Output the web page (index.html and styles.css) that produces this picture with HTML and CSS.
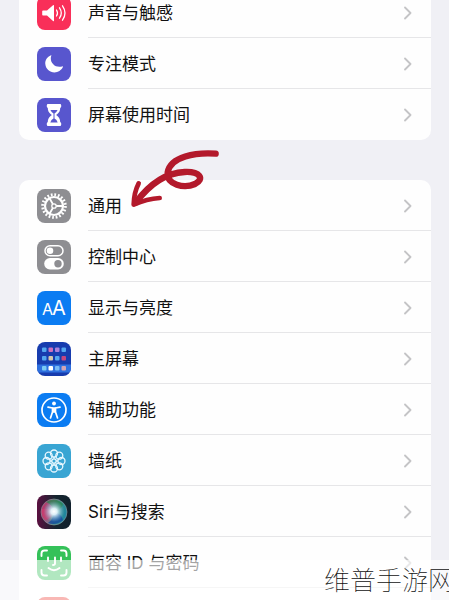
FILE: index.html
```html
<!DOCTYPE html>
<html lang="zh-CN">
<head>
<meta charset="utf-8">
<meta name="viewport" content="width=device-width, initial-scale=1">
<title>设置</title>
<link rel="stylesheet" href="styles.css">
</head>
<body>
<svg class="defs" aria-hidden="true">
  <defs>
    <symbol id="chevron" viewBox="0 0 8 14"><path d="M1 1.500 6.500 7 1 12.500" fill="none" stroke="#c4c4c6" stroke-width="1.800" stroke-linecap="round" stroke-linejoin="round"/></symbol>
    <radialGradient id="siri-core"><stop offset="0" stop-color="#fff"/><stop offset=".3" stop-color="#e4f6fd" stop-opacity=".95"/><stop offset="1" stop-color="#7bb7dc" stop-opacity="0"/></radialGradient>
    <linearGradient id="siri-orb" x1="0" y1=".3" x2="1" y2=".6"><stop offset="0" stop-color="#c22b63"/><stop offset=".4" stop-color="#8b6a88"/><stop offset=".6" stop-color="#3c8e86"/><stop offset="1" stop-color="#1b86a4"/></linearGradient>
    <linearGradient id="siri-bg"><stop offset="0" stop-color="#5b1040"/><stop offset=".55" stop-color="#15252f"/><stop offset="1" stop-color="#10202c"/></linearGradient>
  </defs>
</svg>
<main class="settings">
  <ul class="card card-top">
    <li class="row"><a href="#sound">
      <svg class="icon pink" viewBox="0 0 34 34"><path d="M6 14.500h4l6-5.300q1-.7 1 .6v14.600q0 1.200-1 .5l-6-5.300H6q-.8 0-.8-.8v-3.500q0-.8.8-.8z" fill="#fff"/><path d="M19.500 14q2 3 0 6M22.500 11.800q3.600 5.200 0 10.400M25.500 9.800q5 7.200 0 14.400" fill="none" stroke="#fff" stroke-width="1.300" stroke-linecap="round"/></svg>
      <span class="label">声音与触感</span><svg class="chevron"><use href="#chevron"/></svg></a></li>
    <li class="row"><a href="#focus">
      <svg class="icon purple" viewBox="0 0 34 34"><path d="M14 8.200c-3.800 1.500-6 5-5.700 8.800.4 4.900 4.400 8.500 9.200 8.500 3.500 0 6.900-2.200 8.400-5.400.3-.7-.1-.9-.7-.7-5.900 1.800-11.500-2.200-11.400-8.100 0-.9.200-1.700.5-2.500.2-.5.200-.8-.3-.6z" fill="#fff"/></svg>
      <span class="label">专注模式</span><svg class="chevron"><use href="#chevron"/></svg></a></li>
    <li class="row"><a href="#screen-time">
      <svg class="icon purple" viewBox="0 0 34 34"><path d="M11 6h12q1.200 0 1.200 1.200v1.300q0 1.200-1 1.200c0 4-1.800 5.700-4.200 7.300 2.400 1.600 4.200 3.300 4.200 7.300q1 0 1 1.200v1.300q0 1.200-1.200 1.200H11q-1.200 0-1.200-1.200v-1.300q0-1.200 1-1.200c0-4 1.800-5.700 4.200-7.300-2.400-1.600-4.200-3.300-4.200-7.300q-1 0-1-1.200V7.200Q9.800 6 11 6z" fill="#fff"/><path d="M13.400 12h7.200q-1 2.200-3.100 3.500v5q2.400 1 3.200 3.900h-7.400q.8-2.900 3.200-3.900v-5Q14.400 14.200 13.400 12z" fill="#5856ce"/></svg>
      <span class="label">屏幕使用时间</span><svg class="chevron"><use href="#chevron"/></svg></a></li>
  </ul>

  <ul class="card">
    <li class="row marked"><a href="#general">
      <svg class="icon gray" viewBox="0 0 34 34"><g fill="none" stroke="#fff"><circle cx="17" cy="17" r="11.300" stroke-width="3" stroke-dasharray="1.750 1.800"/><circle cx="17" cy="17" r="9" stroke-width="2.200"/><circle cx="17" cy="17" r="2.200" stroke-width="1.300"/><path d="M19.200 17H26M15.900 15.100 12.500 9.200M15.900 18.900l-3.400 5.900" stroke-width="1.900"/></g></svg>
      <span class="label">通用</span><svg class="chevron"><use href="#chevron"/></svg></a>
      <svg class="arrow" viewBox="327 15 279 195" aria-hidden="true"><g fill="none" stroke="#b3192b" stroke-linecap="round" stroke-linejoin="round"><path d="M587 41C527 37 452 49 443 97c-5 39 51 49 82 35 30-16 14-38-31-36C443 98 392 128 347 188" stroke-width="19"/><path d="M356 130Q342 157 341 194 381 176 419 174" stroke-width="14"/></g></svg></li>
    <li class="row"><a href="#control-center">
      <svg class="icon gray" viewBox="0 0 34 34"><rect x="8" y="5.700" width="18" height="10" rx="5" fill="none" stroke="#fff" stroke-width="1.500"/><circle cx="13" cy="10.700" r="3.300" fill="#fff"/><rect x="7.200" y="18" width="19.600" height="11.400" rx="5.700" fill="#fff"/><circle cx="21" cy="23.700" r="3.700" fill="#8e8e92"/></svg>
      <span class="label">控制中心</span><svg class="chevron"><use href="#chevron"/></svg></a></li>
    <li class="row"><a href="#display">
      <svg class="icon blue" viewBox="0 0 34 34"><text class="aa" x="5" y="24" font-size="16">A</text><text class="aa" x="15" y="24" font-size="20">A</text></svg>
      <span class="label">显示与亮度</span><svg class="chevron"><use href="#chevron"/></svg></a></li>
    <li class="row"><a href="#home-screen">
      <svg class="icon home" viewBox="0 0 34 34"><rect y="22.500" width="34" height="8" fill="#2e70df"/><g fill="#54a7ef"><rect x="5" y="5.500" width="4.500" height="4.500" rx="1"/><rect x="5" y="14" width="4.500" height="4.500" rx="1"/><rect x="18" y="14" width="4.500" height="4.500" rx="1"/><rect x="24.500" y="5.500" width="4.500" height="4.500" rx="1"/></g><rect x="11.500" y="5.500" width="4.500" height="4.500" rx="1" fill="#ce70bb"/><rect x="18" y="5.500" width="4.500" height="4.500" rx="1" fill="#a981dc"/><rect x="11.500" y="14" width="4.500" height="4.500" rx="1" fill="#d3c8ad"/><rect x="24.500" y="14" width="4.500" height="4.500" rx="1" fill="#c44780"/><rect x="5" y="24" width="4.500" height="4.500" rx="1" fill="#7bcaf5"/><rect x="11.500" y="24" width="4.500" height="4.500" rx="1" fill="#fff"/><rect x="18" y="24" width="4.500" height="4.500" rx="1" fill="#79baf5"/><rect x="24.500" y="24" width="4.500" height="4.500" rx="1" fill="#d3a4b5"/></svg>
      <span class="label">主屏幕</span><svg class="chevron"><use href="#chevron"/></svg></a></li>
    <li class="row"><a href="#accessibility">
      <svg class="icon blue" viewBox="0 0 34 34"><circle cx="17" cy="17" r="12" fill="none" stroke="#fff" stroke-width="1.700"/><circle cx="17" cy="10.500" r="1.900" fill="#fff"/><path d="M11 14.200 15.500 15v4l-2 6M23 14.200 18.500 15v4l2 6" fill="none" stroke="#fff" stroke-width="1.700" stroke-linecap="round" stroke-linejoin="round"/><path d="M15 14.300h4v5.500h-4z" fill="#fff"/></svg>
      <span class="label">辅助功能</span><svg class="chevron"><use href="#chevron"/></svg></a></li>
    <li class="row"><a href="#wallpaper">
      <svg class="icon sky" viewBox="0 0 34 34"><g fill="none" stroke="#e9f8ff" stroke-width="1.300"><circle cx="17" cy="9.500" r="3.500"/><circle cx="22.300" cy="11.700" r="3.500"/><circle cx="24.500" cy="17" r="3.500"/><circle cx="22.300" cy="22.300" r="3.500"/><circle cx="17" cy="24.500" r="3.500"/><circle cx="11.700" cy="22.300" r="3.500"/><circle cx="9.500" cy="17" r="3.500"/><circle cx="11.700" cy="11.700" r="3.500"/><circle cx="17" cy="17" r="2.200"/><path d="M17 13v1.800M17 19.200V21M13 17h1.800M19.200 17H21"/></g></svg>
      <span class="label">墙纸</span><svg class="chevron"><use href="#chevron"/></svg></a></li>
    <li class="row"><a href="#siri">
      <svg class="icon" viewBox="0 0 34 34"><rect width="34" height="34" fill="url(#siri-bg)"/><circle cx="17" cy="17" r="13" fill="url(#siri-orb)" stroke="#8c9aa2" stroke-opacity=".6"/><path d="M9 7q9-6 17 2-1 6-9 8Q16 10 9 7z" fill="#29834f" opacity=".75"/><path d="M17 17q8 2 9 8-7 6-15 3 5-3 6-11z" fill="#164a9f" opacity=".8"/><path d="M5 14q7-1 12 3-4 8-9 8-4-5-3-11z" fill="#d33d70" opacity=".65"/><circle cx="17" cy="16.500" r="10.500" fill="url(#siri-core)"/></svg>
      <span class="label">Siri与搜索</span><svg class="chevron"><use href="#chevron"/></svg></a></li>
    <li class="row"><a href="#face-id">
      <svg class="icon green" viewBox="0 0 34 34"><g fill="none" stroke="#fff" stroke-width="1.900" stroke-linecap="round" stroke-linejoin="round"><path d="M4.500 10V7.500q0-3 3-3H10M24 4.500h2.500q3 0 3 3V10M29.500 24v2.500q0 3-3 3H24M10 29.500H7.500q-3 0-3-3V24M11 11.500V15M24 11.500V15M18 11.500v6q0 1.500-2 1.500M11.500 22q5.500 4.500 11 0"/></g></svg>
      <span class="label">面容 ID 与密码</span><svg class="chevron"><use href="#chevron"/></svg></a></li>
    <li class="row"><a href="#sos" aria-label="SOS"><svg class="icon red" viewBox="0 0 34 34"></svg></a></li>
  </ul>
</main>
<footer class="watermark">维普手游网</footer>
</body>
</html>
```

FILE: styles.css
```css
* {
  box-sizing: border-box;
}

body {
  margin: 0;
  height: 100vh;
  overflow: hidden;
  position: relative;
  background: #f0f0f5;
  color: #111;
  font-family: Inter, "Noto Sans CJK SC", sans-serif;
}

.defs {
  position: absolute;
  width: 0;
  height: 0;
}

.settings {
  display: flex;
  flex-direction: column;
  gap: 40px;
  padding: 0 18px 0 19px;
}

.card {
  list-style: none;
  margin: 0;
  padding: 0;
  background: #fefefe;
  border-radius: 10px;
}

.card-top {
  margin-top: -13px;
}

.row a {
  display: grid;
  grid-template-columns: 34px 1fr 8px;
  align-items: center;
  column-gap: 17px;
  height: 51px;
  padding: 0 19px 0 18px;
  color: inherit;
  text-decoration: none;
  background: linear-gradient(#e6e6e8, #e6e6e8) 69px 100% / 100% 1px no-repeat;
}

.row:last-child a {
  background: none;
}

.marked {
  position: relative;
}

.icon {
  width: 34px;
  height: 34px;
  border-radius: 8px;
  overflow: hidden;
}

.pink { background: #f92f59; }
.purple { background: #5856ce; }
.gray { background: #8e8e92; }
.blue { background: #0b7cf2; }
.home { background: #173cae; }
.sky { background: #39a5d3; }
.green { background: #34c159; }
.red { background: #ee443d; }

.aa {
  fill: #fff;
  font-family: Inter, sans-serif;
}

.label {
  padding-top: 1px;
  font-size: 17px;
  line-height: 24px;
  white-space: nowrap;
}

.chevron {
  width: 8px;
  height: 14px;
}

.arrow {
  position: absolute;
  left: 110px;
  top: -35px;
  width: 93px;
  height: 65px;
}

.watermark {
  position: absolute;
  left: 0;
  right: 0;
  bottom: 0;
  height: 40px;
  display: flex;
  justify-content: flex-end;
  margin-right: -5px;
  background: rgba(255, 255, 255, 0.62);
  font-family: "Noto Sans CJK SC", sans-serif;
  font-size: 26px;
  font-weight: 100;
  line-height: 38px;
  white-space: nowrap;
}
```
